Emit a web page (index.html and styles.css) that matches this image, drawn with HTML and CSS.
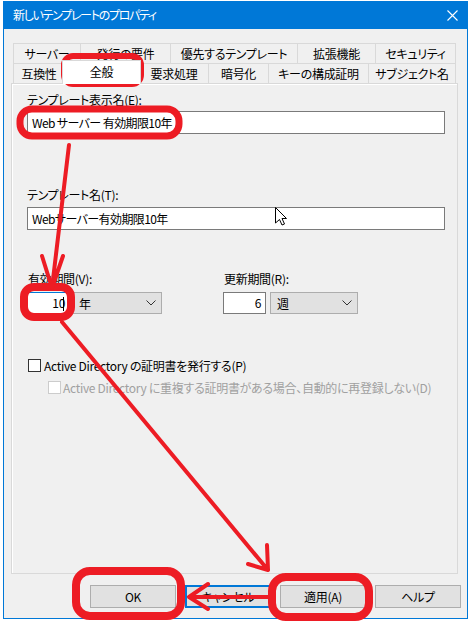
FILE: index.html
```html
<!DOCTYPE html>
<html lang="ja">
<head>
<meta charset="utf-8">
<title>新しいテンプレートのプロパティ</title>
<link rel="stylesheet" href="styles.css">
</head>
<body>
<div class="win">
  <div class="titlebar">
    <span class="title">新しいテンプレートのプロパティ</span>
    <svg class="close" width="11" height="11" viewBox="0 0 11 11"><path d="M0.5 0.5 L10.5 10.5 M10.5 0.5 L0.5 10.5" stroke="#fff" stroke-width="1.1" fill="none"/></svg>
  </div>
  <div class="client">
    <div class="tabctl">
      <div class="tabrow">
        <div class="tab t1">サーバー</div>
        <div class="tab t2">発行の要件</div>
        <div class="tab t3">優先するテンプレート</div>
        <div class="tab t4">拡張機能</div>
        <div class="tab t5 last">セキュリティ</div>
      </div>
      <div class="tabrow">
        <div class="tab t6">互換性</div>
        <div class="tab t7 sel">全般</div>
        <div class="tab t8">要求処理</div>
        <div class="tab t9">暗号化</div>
        <div class="tab t10">キーの構成証明</div>
        <div class="tab t11 last">サブジェクト名</div>
      </div>
      <div class="panel">
        <div class="lbl">テンプレート表示名(E):</div>
        <div class="field">Web サーバー 有効期限10年</div>
        <div class="lbl lbl2">テンプレート名(T):</div>
        <div class="field field2">Webサーバー有効期限10年</div>
        <div class="periods">
          <div class="pgroup first">
            <div class="lbl">有効期間(V):</div>
            <div class="pctrl">
              <div class="num focus">10<span class="caret"></span></div>
              <div class="combo c1"><span>年</span><svg width="10" height="6" viewBox="0 0 10 6"><polyline points="0.5,0.5 5,5 9.5,0.5" fill="none" stroke="#333" stroke-width="1"/></svg></div>
            </div>
          </div>
          <div class="pgroup">
            <div class="lbl">更新期間(R):</div>
            <div class="pctrl wide">
              <div class="num">6</div>
              <div class="combo c2"><span>週</span><svg width="10" height="6" viewBox="0 0 10 6"><polyline points="0.5,0.5 5,5 9.5,0.5" fill="none" stroke="#333" stroke-width="1"/></svg></div>
            </div>
          </div>
        </div>
        <div class="chk"><span class="box"></span><span>Active Directory の証明書を発行する(P)</span></div>
        <div class="chk chk2"><span class="box"></span><span>Active Directory に重複する証明書がある場合、自動的に再登録しない(D)</span></div>
      </div>
    </div>
    <div class="buttons">
      <div class="btn">OK</div>
      <div class="btn def">キャンセル</div>
      <div class="btn">適用(A)</div>
      <div class="btn">ヘルプ</div>
    </div>
  </div>
</div>
<svg class="overlay" width="471" height="623" viewBox="0 0 471 623">
  <g fill="none" stroke="#ed1c24" stroke-linecap="round" stroke-linejoin="round">
    <rect x="64" y="56" width="77" height="28" rx="9" stroke-width="6"/>
    <rect x="20" y="109" width="159" height="27" rx="12" stroke-width="7"/>
    <rect x="24" y="287" width="47" height="30" rx="10" stroke-width="8"/>
    <rect x="76" y="571" width="105" height="45" rx="14" stroke-width="8"/>
    <rect x="272" y="577" width="97" height="40" rx="14" stroke-width="8"/>
    <path d="M69 145 L52 288 M42 256 L52 288 L63 256" stroke-width="4"/>
    <path d="M62 322 L268 570 M267 545 L268 570 L248 564" stroke-width="4"/>
    <path d="M268 597 L189 597 M208 584 L189 597 L208 609" stroke-width="4"/>
  </g>
  <path d="M275.5 207.5 L275.5 223 L279.5 219.5 L282 225 L284.5 224 L282 218.5 L286.5 218.5 Z" fill="#fff" stroke="#000" stroke-width="1"/>
</svg>
</body>
</html>
```

FILE: styles.css
```css
html, body {
  margin: 0;
  padding: 0;
}
body {
  width: 471px;
  height: 623px;
  background: #fff;
  position: relative;
  overflow: hidden;
  font-family: "Noto Sans CJK JP", sans-serif;
  font-size: 12px;
  font-feature-settings: "palt" 1;
  letter-spacing: -0.3px;
  color: #000;
}
.win {
  margin: 1px 0 0 3px;
  width: 465px;
  height: 618px;
  box-sizing: border-box;
  display: flex;
  flex-direction: column;
}
.titlebar {
  height: 28px;
  flex: none;
  background: #0078d7;
  color: #fff;
  display: flex;
  align-items: center;
  justify-content: space-between;
  padding: 0 10px 0 10px;
  box-sizing: border-box;
}
.title {
  line-height: 16px;
  letter-spacing: -1.3px;
}
.close {
  display: block;
}
.client {
  flex: 1;
  background: #f0f0f0;
  border: 1px solid #0078d7;
  border-top: 0;
}
.tabctl {
  margin: 14px 0 0 7px;
  width: 447px;
}
.tabrow {
  display: flex;
  margin-left: 2px;
  height: 20px;
}
.tab {
  box-sizing: border-box;
  height: 20px;
  border: 1px solid #d9d9d9;
  border-right: 0;
  border-bottom: 0;
  display: flex;
  align-items: center;
  justify-content: center;
  white-space: nowrap;
  flex: none;
  line-height: 16px;
}
.tab.last {
  border-right: 1px solid #d9d9d9;
}
.t1 { width: 67px; }
.t2 { width: 90px; }
.t3 { width: 127px; }
.t4 { width: 78px; }
.t5 { width: 81px; }
.t6 { width: 51px; }
.t7 { width: 79px; }
.t8 { width: 69px; }
.t9 { width: 60px; }
.t10 { width: 100px; }
.t11 { width: 88px; }
.tab.sel {
  background: #fff;
  height: 24px;
  margin: -3px -2px -1px -2px;
  position: relative;
  z-index: 1;
  border-right: 1px solid #d9d9d9;
  padding-bottom: 2px;
}
.panel {
  box-sizing: border-box;
  height: 491px;
  border: 1px solid #d9d9d9;
  box-shadow: inset 1px 1px 0 #fff;
  padding: 8px 13px 0 15px;
}
.lbl {
  line-height: 16px;
  height: 16px;
  white-space: nowrap;
}
.lbl2 {
  margin-top: 53px;
}
.field {
  height: 23px;
  box-sizing: border-box;
  border: 1px solid #7a7a7a;
  background: #fff;
  margin-top: 3px;
  width: 418px;
  padding-left: 4px;
  line-height: 21px;
  white-space: nowrap;
  letter-spacing: -0.6px;
}
.field2 {
  margin-top: 4px;
}
.periods {
  display: flex;
  margin-top: 41px;
}
.pgroup {
  display: flex;
  flex-direction: column;
}
.pgroup.first {
  width: 196px;
}
.pgroup .lbl {
  padding-left: 1px;
}
.pctrl {
  display: flex;
  margin-top: 5px;
  gap: 2px;
}
.pctrl.wide {
  gap: 4px;
}
.num {
  width: 43px;
  height: 22px;
  box-sizing: border-box;
  border: 1px solid #7a7a7a;
  background: #fff;
  text-align: right;
  padding-right: 4px;
  line-height: 20px;
}
.num.focus {
  border-color: #0078d7;
  padding-right: 5px;
}
.caret {
  display: inline-block;
  width: 1px;
  height: 14px;
  background: #000;
  margin-left: -2px;
  vertical-align: -3px;
}
.combo {
  height: 22px;
  box-sizing: border-box;
  border: 1px solid #adadad;
  background: #e1e1e1;
  display: flex;
  align-items: center;
  justify-content: space-between;
  padding: 0 5px 0 6px;
}
.combo svg {
  display: block;
}
.c1 { width: 90px; }
.c2 { width: 88px; }
.chk {
  display: flex;
  align-items: center;
  margin-top: 43px;
  height: 16px;
  white-space: nowrap;
}
.box {
  width: 13px;
  height: 13px;
  box-sizing: border-box;
  border: 1px solid #333;
  background: #fff;
  margin: 0 3px 0 1px;
  flex: none;
}
.chk2 {
  margin-top: 6px;
  padding-left: 20px;
  color: #a0a0a0;
}
.chk2 .box {
  border-color: #cccccc;
  margin-right: 2px;
}
.buttons {
  display: flex;
  gap: 9px;
  margin: 11px 0 0 86px;
}
.btn {
  width: 86px;
  height: 23px;
  box-sizing: border-box;
  border: 1px solid #adadad;
  background: #e1e1e1;
  display: flex;
  align-items: center;
  justify-content: center;
  white-space: nowrap;
}
.btn.def {
  border: 2px solid #0078d7;
}
.overlay {
  position: absolute;
  left: 0;
  top: 0;
  pointer-events: none;
}
```
